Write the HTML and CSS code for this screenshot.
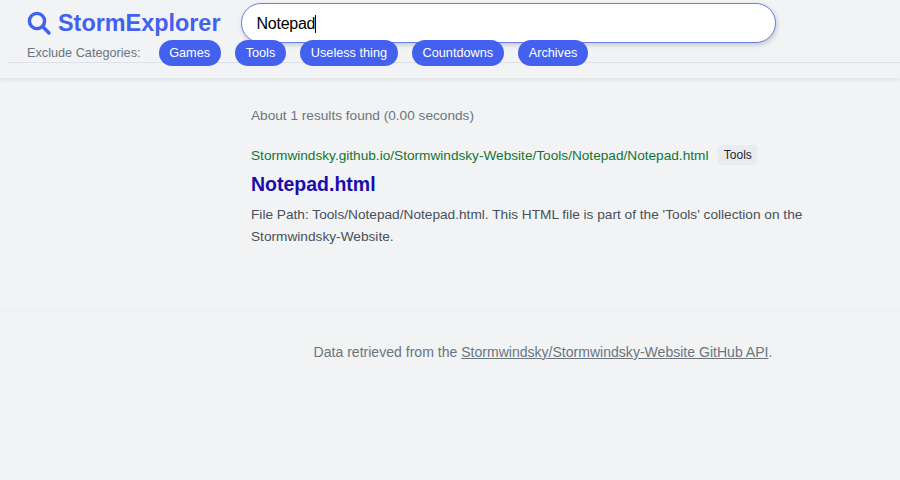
FILE: index.html
```html
<!DOCTYPE html>
<html lang="en">
<head>
    <meta charset="UTF-8">
    <meta name="viewport" content="width=device-width, initial-scale=1.0">
    <title>StormExplorer</title>
    <link rel="stylesheet" href="styles.css">
</head>
<body>
    <div class="header">
        <div class="top-row">
            <a class="logo" href="#">
                <svg class="logo-icon" viewBox="0 0 24 24" fill="none" stroke="#4361ee" stroke-width="3.4" stroke-linecap="round">
                    <circle cx="10" cy="10" r="7.6"/>
                    <path d="M15.8 15.8 L22 22"/>
                </svg>
                StormExplorer
            </a>
            <div class="search-box">Notepad<span class="caret"></span></div>
        </div>
        <div class="filter-row">
            <span class="filter-label">Exclude Categories:</span>
            <span class="chip">Games</span>
            <span class="chip">Tools</span>
            <span class="chip">Useless thing</span>
            <span class="chip">Countdowns</span>
            <span class="chip">Archives</span>
        </div>
    </div>

    <div class="main">
        <p class="stats">About 1 results found (0.00 seconds)</p>
        <div class="result">
            <div class="result-url">
                <span class="url">Stormwindsky.github.io/Stormwindsky-Website/Tools/Notepad/Notepad.html</span>
                <span class="tag">Tools</span>
            </div>
            <a class="result-title" href="#">Notepad.html</a>
            <p class="snippet">File Path: Tools/Notepad/Notepad.html. This HTML file is part of the 'Tools' collection on the Stormwindsky-Website.</p>
        </div>
    </div>

    <div class="footer">
        <p>Data retrieved from the <a href="#">Stormwindsky/Stormwindsky-Website GitHub API</a>.</p>
    </div>
</body>
</html>
```

FILE: styles.css
```css
* {
    margin: 0;
    padding: 0;
    box-sizing: border-box;
}
body {
    font-family: 'Liberation Sans', Arial, sans-serif;
    background-color: #f1f3f5;
    color: #495057;
    height: 480px;
    overflow: hidden;
}
.header {
    height: 78px;
    padding: 3px 0 0 8px;
    box-shadow: 0 2px 4px rgba(0, 0, 0, 0.08);
}
.top-row {
    display: flex;
    align-items: center;
    padding-left: 19px;
    gap: 21px;
}
.logo {
    display: flex;
    align-items: center;
    gap: 7px;
    font-size: 23.4px;
    font-weight: bold;
    color: #4361ee;
    text-decoration: none;
}
.logo-icon {
    width: 24px;
    height: 24px;
}
.search-box {
    width: 535px;
    height: 40px;
    padding-left: 14px;
    font-size: 16px;
    letter-spacing: -0.25px;
    line-height: 39px;
    color: #000;
    background-color: #fff;
    border: 1px solid #6b7fe8;
    border-radius: 20px;
    box-shadow: 1px 2px 5px rgba(0, 0, 0, 0.18);
}
.caret {
    display: inline-block;
    width: 1px;
    height: 18px;
    background-color: #000;
    vertical-align: -4px;
}
.filter-row {
    display: flex;
    align-items: center;
    height: 26px;
    margin-top: -3px;
    padding-left: 19px;
    position: relative;
}
.filter-row::after {
    content: "";
    position: absolute;
    left: 0;
    right: 0;
    bottom: 3px;
    border-bottom: 1px solid #dee2e6;
}
.filter-label {
    font-size: 12.7px;
    color: #6c757d;
    margin-right: 18px;
}
.chip {
    position: relative;
    z-index: 1;
    height: 26px;
    padding: 0 10.6px;
    margin-right: 14.4px;
    font-size: 12.7px;
    line-height: 26px;
    color: #fff;
    background-color: #4361ee;
    border-radius: 13px;
}
.main {
    width: 584px;
    margin-left: 251px;
    padding-top: 30px;
}
.stats {
    font-size: 13.65px;
    line-height: 16px;
    color: #6c757d;
    margin-bottom: 21px;
}
.result-url {
    display: flex;
    align-items: center;
    gap: 10px;
    height: 20px;
}
.url {
    font-size: 13.65px;
    color: #137333;
}
.tag {
    font-size: 12px;
    line-height: 14px;
    padding: 3px 5.4px;
    color: #212529;
    background-color: #e9ecef;
    border-radius: 4px;
}
.result-title {
    display: block;
    margin-top: 7px;
    font-size: 19.5px;
    line-height: 24px;
    font-weight: bold;
    color: #1a0dab;
    text-decoration: none;
}
.snippet {
    margin-top: 8px;
    font-size: 13.68px;
    line-height: 22px;
    color: #495057;
}
.footer {
    margin-top: 62px;
    padding-top: 33px;
    border-top: 1px solid #eceef0;
    text-align: center;
}
.footer p {
    width: 584px;
    margin-left: 251px;
    font-size: 14.05px;
    line-height: 16px;
    color: #6c757d;
}
.footer a {
    color: #6c757d;
}
```
